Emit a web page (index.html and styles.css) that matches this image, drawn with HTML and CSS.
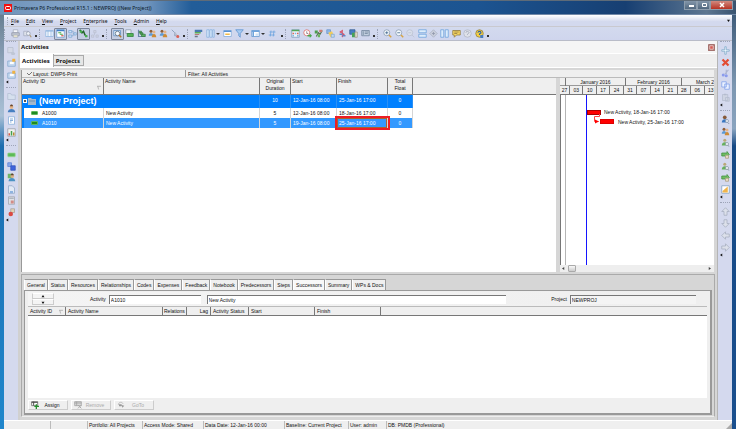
FILE: index.html
```html
<!DOCTYPE html>
<html lang="en">
<head>
    <meta charset="UTF-8">
    <meta name="viewport" content="width=device-width, initial-scale=1.0">
    <title>Primavera P6 Professional R15.1 : NEWPROJ ((New Project))</title>
    <link rel="stylesheet" href="styles.css">
</head>
<body>
    <svg class="sprite" aria-hidden="true">
        <symbol id="print" viewBox="0 0 12 12"><path d="M3 1h6v4H3z" fill="#f4f6fa" stroke="#a4abba"/><path d="M1 5h10v4H1z" fill="#c3c8d2" stroke="#9097a8"/><path d="M3 8h6v3H3z" fill="#f7efcf" stroke="#a4abba"/></symbol>
        <symbol id="preview" viewBox="0 0 12 12"><path d="M1 3h6v6H1z" fill="#dfe3ec" stroke="#a3aabd"/><circle cx="7" cy="6" r="2.5" fill="#eef2f8" stroke="#9299ac"/><path d="M9 8l2 3" stroke="#b09a72" stroke-width="1.5"/></symbol>
        <symbol id="table" viewBox="0 0 12 12"><path d="M1 2h10v8H1z" fill="#f2f7fd" stroke="#8db4de"/><path d="M1 3h10M4 2v8M8 2v8" stroke="#8db4de"/></symbol>
        <symbol id="gantt" viewBox="0 0 12 12"><path d="M1 1h10v10H1z" fill="#fff" stroke="#6f9fd0"/><path d="M1 2h10" stroke="#3f7fc4" stroke-width="2"/><path d="M3 5h4M5 7h4" stroke="#46a84c" stroke-width="1.5"/><path d="M7 9h3" stroke="#d84a42" stroke-width="1.5"/></symbol>
        <symbol id="network" viewBox="0 0 12 12"><path d="M1 2h4v3H1zM1 8h4v3H1zM8 5h3v3H8z" fill="#cfe1f5" stroke="#7aa5d4"/><path d="M5 3h2v6H5M7 6h1" fill="none" stroke="#88a9cc"/></symbol>
        <symbol id="trace" viewBox="0 0 12 12"><path d="M1 1l3 4 2-2 2 5 3 2" fill="none" stroke="#23632a" stroke-width="2"/><path d="M1 2h3v3H1zM8 8h3v3H8z" fill="#45b14d"/></symbol>
        <symbol id="dim" viewBox="0 0 12 12"><path d="M2 8h3v3H2zM8 8h3v3H8zM5 2h3v3H5zM6 5v3" fill="#d0d5e4" stroke="#b9bfd2"/></symbol>
        <symbol id="find" viewBox="0 0 12 12"><path d="M1 2h9v7H1z" fill="#dcecf9" stroke="#5d8cc0"/><circle cx="6" cy="6" r="3" fill="#f6fbff" stroke="#536579"/><path d="M8 8l3 3" stroke="#b97a31" stroke-width="2"/></symbol>
        <symbol id="sheet-green" viewBox="0 0 12 12"><path d="M1 1h7v5H1z" fill="#eef3f8" stroke="#8b98a9"/><path d="M3 6h8v4H3z" fill="#53b457" stroke="#2f7d39"/></symbol>
        <symbol id="bars-green" viewBox="0 0 12 12"><path d="M2 1v9h9" fill="none" stroke="#6a85a8" stroke-width="1.5"/><path d="M3 3h3v2H3zM4 5h4v2H4zM6 7h5v3H6z" fill="#5cb260" stroke="#397e44"/></symbol>
        <symbol id="people" viewBox="0 0 12 12"><circle cx="4" cy="3" r="2" fill="#8d5e38"/><path d="M1 9c0-5 6-5 6 0z" fill="#5b9ad5"/><circle cx="8" cy="4" r="2" fill="#e6b487"/><path d="M5 11c0-6 6-6 6 0z" fill="#ce8b35"/></symbol>
        <symbol id="person" viewBox="0 0 12 12"><circle cx="6" cy="4" r="2.5" fill="#e3b58b"/><path d="M4 3c0-3 4-3 4 0z" fill="#6a4528"/><path d="M1 11c0-6 10-6 10 0z" fill="#477fc1"/></symbol>
        <symbol id="person-find" viewBox="0 0 12 12"><circle cx="5" cy="3" r="2.5" fill="#865a39"/><path d="M1 10c0-6 8-6 8 0z" fill="#3977c2"/><circle cx="8" cy="8" r="2" fill="#eef5fb" stroke="#8796a8"/><path d="M9 10l2 2" stroke="#7b8898"/></symbol>
        <symbol id="cost" viewBox="0 0 12 12"><path d="M1 1l4 4v4h5" fill="none" stroke="#7b91ad"/><path d="M5 5l3 4" stroke="#b7bccb" stroke-width="2"/><circle cx="9" cy="10" r="2" fill="#dc6055"/></symbol>
        <symbol id="group" viewBox="0 0 12 12"><path d="M1 1h10v3H1z" fill="#4779b0"/><path d="M1 4h8v2H1z" fill="#5eae58"/><path d="M1 7h6v1H1z" fill="#b05b54"/><path d="M1 9h4v2H1z" fill="#6d7787"/></symbol>
        <symbol id="columns" viewBox="0 0 12 12"><path d="M1 1h3v10H1zM5 1h3v10H5zM9 1h2v10H9z" fill="#d6e7f9" stroke="#88b0de"/></symbol>
        <symbol id="sort" viewBox="0 0 12 12"><path d="M1 2h10v8H1z" fill="#fff" stroke="#7fa8d8"/><path d="M1 3h10" stroke="#5a92d3" stroke-width="2"/><path d="M3 6h6v2H3z" fill="#f0b846"/></symbol>
        <symbol id="filter" viewBox="0 0 12 12"><path d="M1 1h10L7 6v5L5 9V6z" fill="#a7cbf2" stroke="#5c91cf"/></symbol>
        <symbol id="layout" viewBox="0 0 12 12"><path d="M1 2h10v8H1z" fill="#fff" stroke="#5d94cf"/><path d="M1 3h10M3 4v6" stroke="#6fa4dc" stroke-width="2"/><path d="M6 6h4v3H6z" fill="#cde0f5"/></symbol>
        <symbol id="hash" viewBox="0 0 12 12"><path d="M4 2L3 10M8 2l-1 8M2 4h8M1 8h8" stroke="#67a0dd"/></symbol>
        <symbol id="calendar" viewBox="0 0 12 12"><path d="M1 1h10v10H1z" fill="#edf4fb" stroke="#7b98b8"/><path d="M1 2h10" stroke="#55a557" stroke-width="2"/><path d="M2 5h2v2H2zM8 5h2v2H8z" fill="#dd6657"/><path d="M5 5h2v2H5zM2 8h2v2H2zM8 8h2v2H8z" fill="#7eb6de"/></symbol>
        <symbol id="clock" viewBox="0 0 12 12"><circle cx="5" cy="5" r="4" fill="#fff" stroke="#d9645d"/><path d="M5 3v3h2" fill="none" stroke="#7d6973"/><path d="M6 8h3V6l3 3-3 3v-2H6z" fill="#46a94a"/></symbol>
        <symbol id="level" viewBox="0 0 12 12"><path d="M1 2h4v4H1z" fill="#4b9d4b"/><path d="M3 10l3-5 2 2 3-5" fill="none" stroke="#57704f" stroke-width="1.5"/><path d="M7 1h4v3H7z" fill="#ce7d72"/><path d="M5 7h3v4H5z" fill="#68b45b"/></symbol>
        <symbol id="schedule" viewBox="0 0 12 12"><path d="M1 1h5v5H1z" fill="#8cb6e8" stroke="#6c95c9"/><path d="M3 5l5-2 3 7-5 1z" fill="#f3cc59"/><path d="M7 7h4v4H7z" fill="#c6daf1" stroke="#7da5d3"/></symbol>
        <symbol id="progress" viewBox="0 0 12 12"><path d="M6 1v10" stroke="#d75066"/><path d="M6 2L3 4l5 3-3 3" fill="none" stroke="#d75066" stroke-width="1.5"/><path d="M2 6h4v2H2zM6 8h4v2H6z" fill="#6285c5"/></symbol>
        <symbol id="store" viewBox="0 0 12 12"><path d="M1 1h7v6H1z" fill="#477fc2" stroke="#365d91"/><path d="M4 5h4v6H4z" fill="#47a356"/><path d="M8 4h3v7H8z" fill="#e8e3d3" stroke="#9a9585"/></symbol>
        <symbol id="report" viewBox="0 0 12 12"><path d="M1 2h10v7H1z" fill="#c2cfdf" stroke="#6e8199"/><path d="M3 3v5M5 4h5M5 6h4" stroke="#6e8199"/></symbol>
        <symbol id="zoom-in" viewBox="0 0 12 12"><circle cx="5" cy="5" r="4" fill="#f4f9fd" stroke="#8496ab"/><path d="M3 5h4M5 3v4" stroke="#355d87"/><path d="M8 8l3 3" stroke="#d9a440" stroke-width="2"/></symbol>
        <symbol id="zoom-out" viewBox="0 0 12 12"><circle cx="5" cy="5" r="4" fill="#f4f9fd" stroke="#8496ab"/><path d="M3 5h4" stroke="#355d87"/><path d="M8 8l3 3" stroke="#d9a440" stroke-width="2"/></symbol>
        <symbol id="zoom-off" viewBox="0 0 12 12"><circle cx="5" cy="5" r="4" fill="#d9dfec" stroke="#b9c0d0"/><path d="M3 5h4M8 8l3 3" stroke="#b9c0d0"/></symbol>
        <symbol id="split-h" viewBox="0 0 12 12"><path d="M1 1h10v4H1zM1 7h10v4H1z" fill="#dcecfb" stroke="#69a0dc"/></symbol>
        <symbol id="diamond" viewBox="0 0 12 12"><path d="M6 1l5 5-5 5-5-5z" fill="#c9cedb" stroke="#a9b0c1"/><path d="M6 4v4M4 6h4" stroke="#8e96aa"/></symbol>
        <symbol id="split-v" viewBox="0 0 12 12"><path d="M1 1h4v10H1zM7 1h4v10H7z" fill="#dcecfb" stroke="#69a0dc"/></symbol>
        <symbol id="note" viewBox="0 0 12 12"><path d="M1 2h10v6H6l-3 3V8H1z" fill="#f7d765" stroke="#8c7538"/><path d="M3 4h6M3 6h4" stroke="#8c7538"/></symbol>
        <symbol id="help-off" viewBox="0 0 12 12"><circle cx="6" cy="6" r="5" fill="#dfe2ea" stroke="#b0b5c3"/><path d="M4 5c0-3 4-2 4 0 0 1-2 1-2 2v1" fill="none" stroke="#9aa1b3"/></symbol>
        <symbol id="help" viewBox="0 0 12 12"><circle cx="6" cy="6" r="5" fill="#f5cf43" stroke="#8d7a3b"/><path d="M4 5c0-3 4-2 4 0 0 1-2 1-2 2v1" fill="none" stroke="#2f62a4" stroke-width="1.5"/><path d="M7 8h4v4H7z" fill="#477cc0"/></symbol>
        <symbol id="edit-off" viewBox="0 0 12 12"><path d="M1 2h7v7H1z" fill="#d4d9e6" stroke="#b6bdcd"/><path d="M5 8h4l2 2-1 2H6z" fill="#bfc6d5"/></symbol>
        <symbol id="folder-new" viewBox="0 0 12 12"><path d="M1 4h10v7H1z" fill="#c7daf0" stroke="#83a5cc"/><path d="M4 5h5v3H4z" fill="#fff"/><path d="M7 1h4v4H7z" fill="#efb342"/></symbol>
        <symbol id="folder" viewBox="0 0 12 12"><path d="M1 2h4l1 2h5v6H1z" fill="#d6e0ee" stroke="#b0bdd1"/></symbol>
        <symbol id="page" viewBox="0 0 12 12"><path d="M2 1h8v10H2z" fill="#fff" stroke="#86aeda"/><path d="M4 4h4M4 6h4M4 8h2" stroke="#5d91cc"/></symbol>
        <symbol id="chart" viewBox="0 0 12 12"><path d="M1 1h10v10H1z" fill="#f2f2f0" stroke="#959ca6"/><path d="M2 7h2v3H2z" fill="#d45546"/><path d="M5 4h2v6H5z" fill="#45a14f"/><path d="M8 6h2v4H8z" fill="#ba8a37"/></symbol>
        <symbol id="activity" viewBox="0 0 12 12"><rect x="1" y="4" width="10" height="5" rx="1" fill="#5cbb57" stroke="#9bd696"/></symbol>
        <symbol id="wbs" viewBox="0 0 12 12"><path d="M1 1h5v5H1z" fill="#89a9ea" stroke="#5d80d6"/><path d="M5 5h6v6H5z" fill="#3e64dc" stroke="#3554ba"/></symbol>
        <symbol id="person-green" viewBox="0 0 12 12"><path d="M1 1h6v6H1z" fill="#6fb566"/><circle cx="7" cy="4" r="2.5" fill="#d9b088"/><path d="M5 3c0-3 4-3 4 0z" fill="#5d4630"/><path d="M2 11c0-6 9-6 9 0z" fill="#4b93c4"/></symbol>
        <symbol id="doc" viewBox="0 0 12 12"><path d="M2 1h5l3 3v7H2z" fill="#e2eaf5" stroke="#8fa6c4"/><path d="M4 8h4v3H4z" fill="#8fb3df"/></symbol>
        <symbol id="calc" viewBox="0 0 12 12"><path d="M2 1h8v10H2z" fill="#dee1e6" stroke="#a0a4ad"/><path d="M3 3h6" stroke="#8e949f"/><path d="M5 6h4v4H5z" fill="#d28b86"/></symbol>
        <symbol id="risk" viewBox="0 0 12 12"><path d="M5 1h5v5H5z" fill="#ded2b4" stroke="#a8a199"/><circle cx="5" cy="8" r="3" fill="#da4a41"/></symbol>
        <symbol id="plus" viewBox="0 0 12 12"><path d="M5 1h2v4h4v2H7v4H5V7H1V5h4z" fill="#e9f5fc" stroke="#7fa9c8"/></symbol>
        <symbol id="delete" viewBox="0 0 12 12"><path d="M2 2l8 8M10 2l-8 8" stroke="#e24c34" stroke-width="3"/></symbol>
        <symbol id="cut" viewBox="0 0 12 12"><path d="M10 1L5 7M7 1v6" stroke="#abb4d0" stroke-width="1.5"/><circle cx="3" cy="8" r="2" fill="#8b9cec"/><circle cx="7" cy="9" r="2" fill="#8b9cec"/></symbol>
        <symbol id="copy" viewBox="0 0 12 12"><path d="M1 1h6v7H1zM5 4h6v7H5z" fill="#eaf1ff" stroke="#7e9fe9"/></symbol>
        <symbol id="paste-off" viewBox="0 0 12 12"><path d="M2 2h7v8H2zM6 6h5v5H6z" fill="#ced4e2" stroke="#b4bccf"/><path d="M4 1h3v2H4z" fill="#b4bccf"/></symbol>
        <symbol id="res-green" viewBox="0 0 12 12"><circle cx="5" cy="3" r="2" fill="#b9a878"/><path d="M1 10c0-6 8-6 8 0z" fill="#67b05c"/><circle cx="8" cy="8" r="2" fill="#fff" stroke="#8593a4"/><path d="M9 10l2 1" stroke="#7b8898"/></symbol>
        <symbol id="step-green" viewBox="0 0 12 12"><path d="M1 4h7V2l3 4-3 3V8H1z" fill="#6fbc64" stroke="#42913f"/><path d="M6 7h4v4H6z" fill="#e9ddc4" stroke="#a99e83"/></symbol>
        <symbol id="code" viewBox="0 0 12 12"><path d="M1 1h10v10H1z" fill="#fff" stroke="#7f9dbf"/><path d="M2 8l7-6v8H2z" fill="#f0b449"/></symbol>
        <symbol id="up" viewBox="0 0 12 12"><path d="M6 1l5 5H8v5H4V6H1z" fill="#dce0ea" stroke="#a6adbf"/></symbol>
        <symbol id="down" viewBox="0 0 12 12"><path d="M6 11l5-5H8V1H4v5H1z" fill="#dce0ea" stroke="#a6adbf"/></symbol>
        <symbol id="left" viewBox="0 0 12 12"><path d="M1 6l5-5v3h5v4H6v3z" fill="#dce0ea" stroke="#a6adbf"/></symbol>
        <symbol id="right" viewBox="0 0 12 12"><path d="M11 6L6 1v3H1v4h5v3z" fill="#dce0ea" stroke="#a6adbf"/></symbol>
        <symbol id="assign" viewBox="0 0 12 12"><path d="M1 1h9v6H1z" fill="#fff" stroke="#4f4f4f"/><path d="M1 2h9M4 1v6" stroke="#4f4f4f" stroke-width="1.5"/><path d="M8 5v7M5 8h7" stroke="#24902c" stroke-width="2"/></symbol>
        <symbol id="remove" viewBox="0 0 12 12"><path d="M1 1h10v6H1z" fill="#d8d8d8" stroke="#999"/><path d="M1 3h10M4 1v6" stroke="#999"/><path d="M6 6l5 5M11 6l-5 5" stroke="#aaa" stroke-width="1.5"/></symbol>
        <symbol id="goto" viewBox="0 0 12 12"><path d="M2 6c0-5 6-5 7-2" fill="none" stroke="#aaa"/><path d="M3 5h4v3H3zM7 6l4 1-3 3z" fill="#999"/></symbol>
        <symbol id="tri-left" viewBox="0 0 4 4"><path d="M3 0v4L0 2z" fill="currentColor"/></symbol>
        <symbol id="tri-right" viewBox="0 0 4 4"><path d="M1 0v4l3-2z" fill="currentColor"/></symbol>
        <symbol id="tri-up" viewBox="0 0 4 4"><path d="M0 3h4L2 0z" fill="currentColor"/></symbol>
        <symbol id="tri-down" viewBox="0 0 4 4"><path d="M0 1h4L2 4z" fill="currentColor"/></symbol>
        <symbol id="sort-mark" viewBox="0 0 5 5"><path d="M0 1h5M1 1l1 4" fill="none" stroke="#aaa"/></symbol>
    </svg>

    <header class="titlebar">
        <svg class="logo" viewBox="0 0 8 8"><rect width="8" height="8" fill="#f01111"/><rect x="1.5" y="2.5" width="5" height="3" rx="1" fill="none" stroke="#fff"/></svg>
        <h1>Primavera P6 Professional R15.1 : NEWPROJ ((New Project))</h1>
        <div class="window-buttons">
            <button aria-label="Minimize"><svg viewBox="0 0 8 6"><path d="M2 3h5v2H2z" fill="#fff"/></svg></button>
            <button aria-label="Maximize"><svg viewBox="0 0 8 6"><path d="M2.5 1.5h4v3h-4z" fill="none" stroke="#fff"/></svg></button>
            <button class="close" aria-label="Close"><svg viewBox="0 0 8 6"><path d="M2 1l4 4M6 1L2 5" stroke="#fff" stroke-width="1.5"/></svg></button>
        </div>
    </header>

    <div class="app">
        <nav class="menubar">
            <a href="#"><u>F</u>ile</a>
            <a href="#"><u>E</u>dit</a>
            <a href="#"><u>V</u>iew</a>
            <a href="#"><u>P</u>roject</a>
            <a href="#">E<u>n</u>terprise</a>
            <a href="#"><u>T</u>ools</a>
            <a href="#"><u>A</u>dmin</a>
            <a href="#"><u>H</u>elp</a>
            <svg class="menu-more"><use href="#tri-down"/></svg>
        </nav>

        <div class="toolbar">
            <div class="tools tools-print">
                <button aria-label="Print"><svg><use href="#print"/></svg></button>
                <button aria-label="Print preview"><svg><use href="#preview"/></svg></button>
                <i class="more"></i>
            </div>
            <div class="tools tools-view">
                <button aria-label="Activity table"><svg><use href="#table"/></svg></button>
                <button class="pressed" aria-label="Gantt chart"><svg><use href="#gantt"/></svg></button>
                <button aria-label="Activity network"><svg><use href="#network"/></svg></button>
                <button class="pressed" aria-label="Relationship lines"><svg><use href="#trace"/></svg></button>
                <button aria-label="Trace logic"><svg><use href="#dim"/></svg></button>
                <i class="more"></i>
            </div>
            <div class="tools tools-detail">
                <button class="pressed" aria-label="Details"><svg><use href="#find"/></svg></button>
                <button aria-label="Activity usage"><svg><use href="#sheet-green"/></svg></button>
                <button aria-label="Activity profile"><svg><use href="#bars-green"/></svg></button>
                <button aria-label="Resource usage"><svg><use href="#people"/></svg></button>
                <button aria-label="Resource profile"><svg><use href="#people"/></svg></button>
                <button aria-label="Cost"><svg><use href="#cost"/></svg></button>
                <i class="more"></i>
            </div>
            <div class="tools tools-layout">
                <button aria-label="Group"><svg><use href="#group"/></svg></button>
                <button class="drop" aria-label="Columns"><svg><use href="#columns"/></svg></button>
                <button aria-label="Sort"><svg><use href="#sort"/></svg></button>
                <button class="drop" aria-label="Filter"><svg><use href="#filter"/></svg></button>
                <button class="drop" aria-label="Layout"><svg><use href="#layout"/></svg></button>
                <button aria-label="Line numbers"><svg><use href="#hash"/></svg></button>
                <i class="more"></i>
            </div>
            <div class="tools tools-run">
                <button aria-label="Calendar"><svg><use href="#calendar"/></svg></button>
                <button aria-label="Schedule"><svg><use href="#clock"/></svg></button>
                <button aria-label="Level"><svg><use href="#level"/></svg></button>
                <button aria-label="Recalculate"><svg><use href="#schedule"/></svg></button>
                <button aria-label="Progress"><svg><use href="#progress"/></svg></button>
                <button aria-label="Store period"><svg><use href="#store"/></svg></button>
                <button aria-label="Reports"><svg><use href="#report"/></svg></button>
                <i class="more"></i>
            </div>
            <div class="tools tools-zoom">
                <button aria-label="Zoom in"><svg><use href="#zoom-in"/></svg></button>
                <button aria-label="Zoom out"><svg><use href="#zoom-out"/></svg></button>
                <button aria-label="Zoom to fit"><svg><use href="#zoom-off"/></svg></button>
                <button aria-label="Split horizontally"><svg><use href="#split-h"/></svg></button>
                <button aria-label="Milestone"><svg><use href="#diamond"/></svg></button>
                <button aria-label="Split vertically"><svg><use href="#split-v"/></svg></button>
                <button aria-label="Hint help"><svg><use href="#note"/></svg></button>
                <button aria-label="Context help"><svg><use href="#help-off"/></svg></button>
                <button aria-label="Help"><svg><use href="#help"/></svg></button>
                <i class="more"></i>
            </div>
        </div>

        <div class="workspace">
            <aside class="sidebar">
                <div class="side-group side-3">
                    <button aria-label="Edit"><svg><use href="#edit-off"/></svg></button>
                    <button aria-label="New folder"><svg><use href="#folder-new"/></svg></button>
                    <button aria-label="Open"><svg><use href="#folder-new"/></svg></button>
                    <svg class="side-more"><use href="#tri-left"/></svg>
                </div>
                <div class="side-group side-4">
                    <button aria-label="Projects"><svg><use href="#folder"/></svg></button>
                    <button aria-label="Resources"><svg><use href="#person"/></svg></button>
                    <button aria-label="Reports"><svg><use href="#page"/></svg></button>
                    <button aria-label="Tracking"><svg><use href="#chart"/></svg></button>
                    <svg class="side-more"><use href="#tri-left"/></svg>
                </div>
                <div class="side-group side-6">
                    <button aria-label="Activities"><svg><use href="#activity"/></svg></button>
                    <button aria-label="WBS"><svg><use href="#wbs"/></svg></button>
                    <button aria-label="Assignments"><svg><use href="#person-green"/></svg></button>
                    <button aria-label="Documents"><svg><use href="#doc"/></svg></button>
                    <button aria-label="Expenses"><svg><use href="#calc"/></svg></button>
                    <button aria-label="Risks"><svg><use href="#risk"/></svg></button>
                    <svg class="side-more"><use href="#tri-left"/></svg>
                </div>
            </aside>

            <main class="content">
                <div class="page-title">
                    <h2>Activities</h2>
                    <button aria-label="Close view"><svg viewBox="0 0 8 8"><rect width="8" height="8" rx="1" fill="#a5736f"/><path d="M2 2h4v4H2z" fill="#d65c55" stroke="#e8c9c6"/></svg></button>
                </div>
                <div class="view-tabs">
                    <button class="active">Activities</button>
                    <button>Projects</button>
                </div>

                <section class="view">
                    <div class="layout-bar">
                        <button><svg viewBox="0 0 5 4"><path d="M0 1l2 2 3-3" fill="none" stroke="#777"/></svg>Layout: DWP6-Print</button>
                        <span>Filter: All Activities</span>
                    </div>
                    <div class="panes">
                        <div class="activity-pane">
                            <table class="activities">
                                <colgroup><col class="c-id"><col class="c-name"><col class="c-dur"><col class="c-start"><col class="c-finish"><col class="c-float"><col></colgroup>
                                <thead>
                                    <tr>
                                        <th><span class="sorted">Activity ID<svg><use href="#sort-mark"/></svg></span></th>
                                        <th>Activity Name</th>
                                        <th class="num">Original Duration</th>
                                        <th>Start</th>
                                        <th>Finish</th>
                                        <th class="num">Total Float</th>
                                        <th></th>
                                    </tr>
                                </thead>
                                <tbody>
                                    <tr class="project">
                                        <td colspan="2"><span class="cell"><i class="collapse"></i><svg viewBox="0 0 8 8"><path d="M0 1h3l1 1h4v6H0z" fill="#a3b8cb"/><path d="M1 4h6" stroke="#7290ab"/></svg><b>(New Project)</b></span></td>
                                        <td class="num">10</td>
                                        <td>12-Jan-16 08:00</td>
                                        <td>25-Jan-16 17:00</td>
                                        <td class="num">0</td>
                                        <td class="blank"></td>
                                    </tr>
                                    <tr>
                                        <td class="id"><span class="cell"><i class="bar"></i>A1000</span></td>
                                        <td>New Activity</td>
                                        <td class="num">5</td>
                                        <td>12-Jan-16 08:00</td>
                                        <td>18-Jan-16 17:00</td>
                                        <td class="num">0</td>
                                        <td class="blank"></td>
                                    </tr>
                                    <tr class="selected">
                                        <td class="id"><span class="cell"><i class="bar"></i>A1010</span></td>
                                        <td>New Activity</td>
                                        <td class="num">5</td>
                                        <td>19-Jan-16 08:00</td>
                                        <td class="focus">25-Jan-16 17:00</td>
                                        <td class="num">0</td>
                                        <td class="blank"></td>
                                    </tr>
                                </tbody>
                            </table>
                        </div>
                        <div class="gantt">
                            <div class="timescale">
                                <div class="months"><span></span><span>January 2016</span><span>February 2016</span><span>March 2</span></div>
                                <div class="weeks"><span>27</span><span>03</span><span>10</span><span>17</span><span>24</span><span>31</span><span>07</span><span>14</span><span>21</span><span>28</span><span>06</span><span>13</span></div>
                            </div>
                            <div class="chart">
                                <i class="year-line"></i>
                                <i class="data-date"></i>
                                <i class="task task-1"></i>
                                <span class="task-label label-1">New Activity, 18-Jan-16 17:00</span>
                                <svg class="link" viewBox="0 0 8 10"><path d="M6.5 0v2.500h-5v5h4" fill="none" stroke="#f44"/><path d="M2 5.500l4 2-4 2z" fill="#f00"/></svg>
                                <i class="task task-2"></i>
                                <span class="task-label label-2">New Activity, 25-Jan-16 17:00</span>
                            </div>
                            <div class="scrollbar"><svg><use href="#tri-left"/></svg><i></i><svg><use href="#tri-right"/></svg></div>
                        </div>
                    </div>
                </section>

                <section class="details">
                    <div class="detail-tabs">
                        <button>General</button><button>Status</button><button>Resources</button><button>Relationships</button><button>Codes</button><button>Expenses</button><button>Feedback</button><button>Notebook</button><button>Predecessors</button><button>Steps</button><button class="active">Successors</button><button>Summary</button><button>WPs &amp; Docs</button>
                    </div>
                    <div class="detail-panel">
                        <div class="fields">
                            <div class="spinner">
                                <button aria-label="Previous activity"><svg><use href="#tri-up"/></svg></button>
                                <button aria-label="Next activity"><svg><use href="#tri-down"/></svg></button>
                            </div>
                            <label for="activityId">Activity</label>
                            <input type="text" id="activityId" value="A1010">
                            <input type="text" id="activityName" value="New Activity" aria-label="Activity name">
                            <label for="project">Project</label>
                            <input type="text" id="project" value="NEWPROJ" readonly>
                        </div>
                        <div class="list">
                            <table class="successors">
                                <colgroup><col class="s-id"><col class="s-name"><col class="s-rel"><col class="s-lag"><col class="s-status"><col class="s-start"><col class="s-finish"><col></colgroup>
                                <thead>
                                    <tr><th><span class="sorted">Activity ID<svg><use href="#sort-mark"/></svg></span></th><th>Activity Name</th><th class="rel">Relations</th><th class="right">Lag</th><th>Activity Status</th><th>Start</th><th>Finish</th><th></th></tr>
                                </thead>
                            </table>
                        </div>
                        <div class="actions">
                            <button><svg><use href="#assign"/></svg><span>Assign</span></button>
                            <button disabled><svg><use href="#remove"/></svg><span>Remove</span></button>
                            <button disabled><svg><use href="#goto"/></svg><span>GoTo</span></button>
                        </div>
                    </div>
                </section>
            </main>

            <aside class="sidebar">
                <div class="side-group side-5">
                    <button aria-label="Add"><svg><use href="#plus"/></svg></button>
                    <button aria-label="Delete"><svg><use href="#delete"/></svg></button>
                    <button aria-label="Cut"><svg><use href="#cut"/></svg></button>
                    <button aria-label="Copy"><svg><use href="#copy"/></svg></button>
                    <button aria-label="Paste"><svg><use href="#paste-off"/></svg></button>
                    <svg class="side-more"><use href="#tri-left"/></svg>
                </div>
                <div class="side-group side-7">
                    <button aria-label="Assign resource"><svg><use href="#person-find"/></svg></button>
                    <button aria-label="Assign by role"><svg><use href="#people"/></svg></button>
                    <button aria-label="Assign role"><svg><use href="#res-green"/></svg></button>
                    <button aria-label="Assign predecessor"><svg><use href="#step-green"/></svg></button>
                    <button aria-label="Find activity"><svg><use href="#res-green"/></svg></button>
                    <button aria-label="Assign successor"><svg><use href="#step-green"/></svg></button>
                    <button aria-label="Assign code"><svg><use href="#code"/></svg></button>
                    <svg class="side-more"><use href="#tri-left"/></svg>
                </div>
                <div class="side-group side-4">
                    <button aria-label="Move up"><svg><use href="#up"/></svg></button>
                    <button aria-label="Move down"><svg><use href="#down"/></svg></button>
                    <button aria-label="Move left"><svg><use href="#left"/></svg></button>
                    <button aria-label="Move right"><svg><use href="#right"/></svg></button>
                    <svg class="side-more"><use href="#tri-left"/></svg>
                </div>
            </aside>
        </div>

        <footer class="statusbar">
            <span class="st-hint"></span>
            <span class="st-blank"></span>
            <span class="st-portfolio">Portfolio: All Projects</span>
            <span class="st-access">Access Mode: Shared</span>
            <span class="st-date">Data Date: 12-Jan-16 00:00</span>
            <span class="st-baseline">Baseline: Current Project</span>
            <span class="st-user">User: admin</span>
            <span>DB: PMDB (Professional)</span>
            <svg class="grip" viewBox="0 0 6 6"><path d="M6 0v6H0z" fill="#aaa"/></svg>
        </footer>
    </div>
</body>
</html>
```
FILE: styles.css
```css
* {
    box-sizing: border-box;
}
body {
    margin: 0;
    height: 100vh;
    display: flex;
    flex-direction: column;
    overflow: hidden;
    font-family: "Liberation Sans", Arial, sans-serif;
    font-size: 5px;
    line-height: 8px;
    color: #111;
    background:
        linear-gradient(#5b7285, #7f95ab 10%, #a9c0d6 27%, #1c6cae 34%, #1f86cc) left / 4px 100% no-repeat,
        linear-gradient(#33506f, #7d97b1 20%, #8aa4bf 30%, #174a85 34%, #1a4f8e) right / 4px 100% no-repeat,
        #1c5491;
}
button, input {
    font: inherit;
    color: inherit;
    margin: 0;
    padding: 0;
    border: none;
    background: none;
}
h1, h2 {
    margin: 0;
}
svg {
    display: block;
    flex: none;
}
.sprite {
    position: absolute;
    width: 0;
    height: 0;
}

/* title bar */
.titlebar {
    height: 15px;
    flex: none;
    display: flex;
    align-items: center;
    gap: 2px;
    padding-left: 4px;
    border-top: 1px solid #5e6b78;
    border-bottom: 1px solid #7289a8;
    background: linear-gradient(90deg, #6f93ba, #7fa1c6 8%, #6f94bd 20%, #225d99 26%, #1c5491 65%, #173f72 85%, #5d7691 96%, #39536f);
}
.logo {
    width: 8px;
    height: 8px;
}
.titlebar h1 {
    flex: 1;
    font: 5px/12px "Noto Sans", sans-serif;
    color: #081626;
}
.window-buttons {
    display: flex;
    align-self: flex-start;
    padding-right: 3px;
}
.window-buttons button {
    width: 13px;
    height: 9px;
    display: flex;
    align-items: center;
    justify-content: center;
    border: 1px solid #8d9dad;
    border-top: none;
    background: linear-gradient(#8396aa, #52687f);
}
.window-buttons .close {
    width: 23px;
    background: linear-gradient(#d18a80, #b63224);
}
.window-buttons svg {
    width: 8px;
    height: 6px;
}

.app {
    flex: 1;
    min-height: 0;
    margin: 0 4px;
    display: flex;
    flex-direction: column;
    background: #d4d9ee;
}

/* menu */
.menubar {
    height: 12px;
    flex: none;
    display: flex;
    align-items: center;
    gap: 7px;
    padding: 0 2px 0 3px;
    border-bottom: 1px solid #c9c9cf;
    background: linear-gradient(#fff, #d3d9ee 60%);
    font: 5px/10px "Noto Sans", sans-serif;
}
.menubar::before {
    content: "";
    height: 8px;
    margin-right: -4px;
    border-left: 1px dotted #a4aabc;
}
.menubar a {
    color: #111;
    text-decoration: none;
}
.menu-more {
    width: 3px;
    height: 3px;
    margin-left: auto;
}

/* tool bar */
.toolbar {
    height: 14px;
    flex: none;
    display: flex;
    border-bottom: 1px solid #b9bcc8;
    background: linear-gradient(#d3daee, #cfd5ed);
}
.tools {
    display: flex;
    align-items: center;
}
.tools::before {
    content: "";
    width: 4px;
    height: 10px;
    flex: none;
    border-left: 1px dotted #9da4b8;
}
.tools button {
    flex: 1;
    height: 12px;
    display: flex;
    align-items: center;
    justify-content: center;
}
.tools svg {
    width: 9px;
    height: 9px;
}
.tools .pressed {
    border: 1px solid #7b8599;
    border-radius: 1px;
    background: #c3cde2;
}
.tools .drop {
    flex: none;
    width: 16px;
    gap: 1px;
}
.tools .drop::after {
    content: "";
    border: 2px solid transparent;
    border-top-color: #333;
    border-bottom: none;
}
.more {
    width: 2px;
    height: 2px;
    flex: none;
    align-self: flex-end;
    margin: 0 2px 3px;
    background: #333;
}
.tools-print {
    width: 35px;
}
.tools-view {
    width: 67px;
}
.tools-detail {
    width: 81px;
}
.tools-layout {
    width: 98px;
}
.tools-run {
    width: 92px;
}
.tools-zoom {
    width: 114px;
}

.workspace {
    flex: 1;
    min-height: 0;
    display: flex;
}

/* side bars */
.sidebar {
    width: 14px;
    flex: none;
    background: #d4d9ee;
}
.side-group {
    display: flex;
    flex-direction: column;
    align-items: center;
    padding-bottom: 3px;
}
.side-group::before {
    content: "";
    width: 10px;
    height: 3px;
    flex: none;
    border-top: 1px dotted #9da4b8;
}
.side-group button {
    flex: 1;
    display: flex;
    align-items: center;
}
.side-group button svg {
    width: 9px;
    height: 9px;
}
.side-more {
    width: 3px;
    height: 4px;
    align-self: flex-start;
    margin-left: 2px;
}
.side-3 {
    height: 46px;
}
.side-4 {
    height: 58px;
}
.side-5 {
    height: 69px;
}
.side-6 {
    height: 80px;
}
.side-7 {
    height: 92px;
}

/* page */
.content {
    flex: 1;
    min-width: 0;
    display: flex;
    flex-direction: column;
    border-left: 2px solid #d0d0d0;
    border-right: 1px solid #b5b5b5;
    background: #d6d6d6;
}
.page-title {
    height: 12px;
    flex: none;
    display: flex;
    align-items: center;
    justify-content: space-between;
    padding: 0 2px 0 1px;
    background: #f5f5f5;
}
.page-title h2 {
    font: bold 6px/10px "Noto Sans", sans-serif;
    color: #111;
}
.page-title svg {
    width: 7px;
    height: 7px;
}
.view-tabs {
    height: 15px;
    flex: none;
    display: flex;
    align-items: flex-end;
    border-top: 1px solid #fff;
    border-bottom: 1px solid #fff;
    background: #efefef;
    font: bold 6px/10px "Noto Sans", sans-serif;
    color: #111;
}
.view-tabs button {
    height: 11px;
    margin-bottom: 1px;
    padding: 0 3px 0 2px;
    border: 1px solid #aaa;
    border-left: none;
    background: #e6e6e6;
}
.view-tabs .active {
    height: 13px;
    margin-bottom: 0;
    padding: 0 3px 0 2px;
    border-top: none;
    border-bottom: none;
    background: #fff;
}

/* activity table and gantt */
.view {
    flex: 1;
    min-height: 0;
    display: flex;
    flex-direction: column;
    margin: 2px 3px 0 1px;
    border-left: 1px solid #999;
}
.layout-bar {
    height: 8px;
    flex: none;
    display: flex;
    border-bottom: 1px solid #bbb;
    background: #efefef;
}
.layout-bar button {
    width: 164px;
    display: flex;
    align-items: center;
    gap: 1px;
    padding-left: 5px;
    border-right: 1px solid #999;
}
.layout-bar svg {
    width: 5px;
    height: 4px;
}
.layout-bar span {
    padding-left: 2px;
}
.panes {
    flex: 1;
    min-height: 0;
    display: flex;
}
.activity-pane {
    flex: 1;
    min-width: 0;
    background: #fff;
}
table {
    width: 100%;
    table-layout: fixed;
    border-collapse: separate;
    border-spacing: 0;
}
th, td {
    padding: 0 2px;
    overflow: hidden;
    white-space: nowrap;
    text-align: left;
    font-weight: normal;
}
.sorted {
    display: flex;
    align-items: flex-end;
    justify-content: space-between;
}
.sorted svg {
    width: 4px;
    height: 5px;
    margin-bottom: 1px;
}
.activities th {
    height: 17px;
    padding-left: 1px;
    vertical-align: top;
    line-height: 7px;
    border-right: 1px solid #777;
    border-bottom: 1px solid #777;
    background: #efefef;
}
.activities th.num {
    padding: 0 4px;
    white-space: normal;
}
.activities th:last-child {
    border-right: none;
}
.activities .sorted {
    height: 12px;
    align-items: flex-start;
}
.activities .sorted svg {
    align-self: flex-end;
    margin-bottom: 0;
}
.activities td {
    height: 10px;
    border-right: 1px solid #d5d5d5;
}
.activities .num {
    text-align: center;
}
.cell {
    display: flex;
    align-items: center;
}
.c-id {
    width: 82px;
}
.c-name {
    width: 156px;
}
.c-dur {
    width: 31px;
}
.c-start {
    width: 46px;
}
.c-finish {
    width: 51px;
}
.c-float {
    width: 25px;
}
.project {
    color: #fff;
    background: #0080ff;
}
.activities .project td {
    height: 13px;
    vertical-align: top;
    line-height: 10px;
    border-right-color: #2a90f5;
}
.project .cell {
    gap: 1px;
}
.project svg {
    width: 8px;
    height: 8px;
}
.project b {
    margin-left: 2px;
    font-size: 9px;
    line-height: 12px;
}
.project td:first-child {
    padding-left: 1px;
}
.collapse {
    width: 4px;
    height: 4px;
    border: 1px solid #fff;
    background: #555;
}
.activities .id {
    padding-left: 7px;
    border-left: 2px solid #0080ff;
}
.id .cell {
    gap: 4px;
}
.bar {
    width: 7px;
    height: 4px;
    border: 1px solid #5cb85c;
    border-radius: 1px;
    background: #1e8a24;
}
.selected {
    color: #fff;
    background: #3399ff;
}
.focus {
    position: relative;
    outline: 2px solid #ee1c24;
    box-shadow: inset 0 0 0 1px #a9622f;
}
.activities td.blank {
    border: none;
    background: #fff;
}

.gantt {
    width: 158px;
    flex: none;
    display: flex;
    flex-direction: column;
    overflow: hidden;
    border-left: 4px solid #d6d6d6;
    background: #fff;
    box-shadow: inset 1px 0 #777;
}
.timescale {
    flex: none;
    width: 158px;
    background: #efefef;
    text-align: center;
}
.months, .weeks {
    display: grid;
    grid-template-columns: 6px 60px 56px 32px;
    height: 8px;
    border-bottom: 1px solid #999;
}
.months span:last-child {
    border: none;
    text-align: right;
}
.weeks {
    grid-template-columns: 10px repeat(11, 1fr);
    height: 9px;
    border-bottom-color: #777;
    line-height: 9px;
}
.timescale span {
    min-width: 0;
    border-right: 1px solid #777;
}
.chart {
    flex: 1;
    position: relative;
}
.year-line, .data-date {
    position: absolute;
    top: 0;
    bottom: 0;
    left: 5px;
    width: 1px;
    background: #b5b5b5;
}
.data-date {
    left: 26px;
    background: #1414ff;
}
.task {
    position: absolute;
    width: 14px;
    height: 5px;
    border: 1px solid #a00;
    background: #f00;
}
.task-1 {
    left: 27px;
    top: 15px;
}
.task-2 {
    left: 40px;
    top: 24px;
    border-color: #d00;
}
.task-label {
    position: absolute;
    white-space: nowrap;
}
.label-1 {
    left: 44px;
    top: 13px;
}
.label-2 {
    left: 58px;
    top: 23px;
}
.link {
    position: absolute;
    left: 33px;
    top: 19px;
    width: 8px;
    height: 10px;
}
.scrollbar {
    height: 7px;
    flex: none;
    display: flex;
    align-items: center;
    padding: 0 3px 0 2px;
    background: #eee;
    color: #444;
}
.scrollbar svg {
    width: 3px;
    height: 3px;
}
.scrollbar i {
    width: 8px;
    height: 7px;
    margin: 0 auto 0 3px;
    border: 1px solid #aaa;
    border-radius: 1px;
    background: linear-gradient(#f8f8f8, #ccc);
}

/* details */
.details {
    flex: none;
    margin: 2px 2px 3px 1px;
    padding: 4px 2px 1px;
    border: 1px solid #aaa;
    border-bottom-color: #eee;
}
.detail-tabs {
    display: flex;
    height: 11px;
}
.detail-tabs button {
    padding: 0 2px;
    border: 1px solid #999;
    border-left-color: #fff;
    border-bottom: none;
    background: #efefef;
}
.detail-tabs .active {
    background: #f8f8f8;
}
.detail-panel {
    padding: 1px 3px 3px;
    border: 1px solid #999;
    border-right-width: 2px;
    border-bottom-width: 2px;
    background: #efefef;
}
.fields {
    display: flex;
    align-items: center;
    height: 14px;
    padding: 0 11px 0 4px;
    background: linear-gradient(90deg, #f4f4f4, #efefef);
}
.fields label {
    margin-right: 3px;
}
.fields label:last-of-type {
    margin-left: 45px;
}
.spinner {
    width: 22px;
    margin-right: 36px;
}
.spinner button {
    width: 100%;
    height: 6px;
    display: flex;
    align-items: center;
    justify-content: center;
    border: 1px solid #ccc;
    border-top-color: #fff;
}
.spinner svg {
    width: 4px;
    height: 3px;
}
.fields input {
    height: 9px;
    min-width: 0;
    padding: 0 1px;
    border-top: 1px solid #777;
    border-left: 1px solid #777;
    background: #fff;
}
#activityId {
    flex: 90;
    margin-right: 6px;
}
#activityName {
    flex: 301;
}
#project {
    flex: 125;
    background: #f4f4f4;
}
.list {
    min-height: 92px;
    border-top: 1px solid #bbb;
    background: #fff;
}
.successors th {
    height: 9px;
    border-right: 1px solid #777;
    border-bottom: 1px solid #777;
    background: #efefef;
}
.successors th:last-child {
    border-right: none;
}
.successors .rel {
    padding: 0 1px;
}
.successors .right {
    text-align: right;
}
.s-id {
    width: 38px;
}
.s-name {
    width: 97px;
}
.s-rel, .s-lag {
    width: 24px;
}
.s-status {
    width: 38px;
}
.s-start, .s-finish {
    width: 66px;
}
.actions {
    display: flex;
    gap: 3px;
    padding-top: 2px;
}
.actions button {
    width: 40px;
    height: 10px;
    display: flex;
    align-items: center;
    padding: 0 2px;
    border: 1px solid #ccc;
    border-top-color: #fff;
    border-left-color: #fff;
}
.actions svg {
    width: 8px;
    height: 8px;
}
.actions span {
    flex: 1;
    text-align: center;
}
.actions button:disabled {
    color: #aaa;
}

/* status bar */
.statusbar {
    height: 9px;
    flex: none;
    display: flex;
    border-top: 1px solid #fff;
    background: #efefef;
}
.statusbar span {
    padding: 0 2px 0 1px;
    border-left: 1px solid #bbb;
    white-space: nowrap;
}
.statusbar .st-hint {
    width: 46px;
    border: none;
}
.st-blank {
    width: 37px;
}
.st-portfolio {
    width: 55px;
}
.st-access {
    width: 61px;
}
.st-date {
    width: 81px;
}
.st-baseline {
    width: 64px;
}
.st-user {
    width: 38px;
}
.grip {
    width: 6px;
    height: 6px;
    margin: 2px 0 0 auto;
}
```
